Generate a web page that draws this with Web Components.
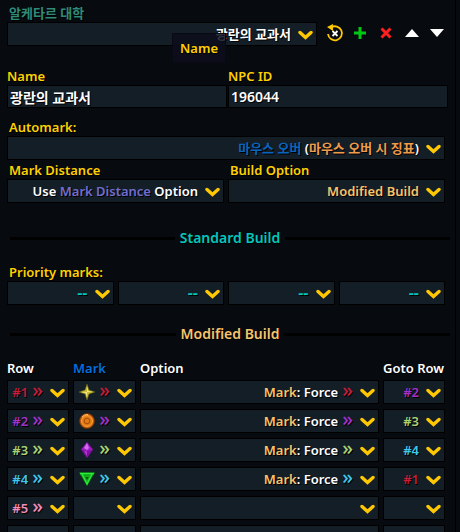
<!DOCTYPE html>
<html lang="ko">
    <head>
        <meta charset="UTF-8" />
        <meta name="viewport" content="width=device-width, initial-scale=1.0" />
        <title>NPC Marks</title>
        <style>
            :root {
                --gold: #ffd100;
                --field: #131e26;
                --r1: #c41e3a;
                --r2: #a330c9;
                --r3: #aad372;
                --r4: #3fc7eb;
                --r5: #f48cba;
            }
            html {
                height: 100%;
                overflow: hidden;
                background: #070a0f;
            }
            body {
                margin: 0;
                color: #fff;
                font: 600 13px/18px 'Noto Sans', 'Noto Sans CJK KR', sans-serif;
                text-shadow: 1px 1px 0 #000;
            }
        </style>
    </head>
    <body>
        <npc-panel></npc-panel>

        <script>
            const define = (name, html, setup) => {
                const template = document.createElement('template')
                template.innerHTML = html
                customElements.define(
                    name,
                    class extends HTMLElement {
                        constructor() {
                            super()
                            this.attachShadow({ mode: 'open' })
                            this.shadowRoot.append(template.content.cloneNode(true))
                        }
                        connectedCallback() {
                            if (setup) setup(this, this.shadowRoot)
                        }
                    }
                )
            }

            // drop-down: the select is the box, the slot is its coloured face
            define(
                'pick-list',
                `
<style>
:host {
    display: block;
    min-width: 0;
}
label {
    display: block;
    padding-left: 2px;
    color: var(--gold);
}
label[hidden] {
    display: none;
}
.box {
    display: grid;
    grid-template-rows: 24px;
}
.box > * {
    grid-area: 1 / 1;
    min-width: 0;
}
select {
    appearance: none;
    width: 100%;
    margin: 0;
    padding: 0;
    border: 1px solid #000;
    border-radius: 0;
    background: var(--field);
    color: transparent;
    font: inherit;
    text-shadow: none;
    outline: 0;
}
.face {
    display: flex;
    align-items: center;
    justify-content: flex-end;
    gap: 7px;
    padding-right: 4px;
    pointer-events: none;
    white-space: nowrap;
}
svg {
    flex: none;
}
</style>
<label for="pick" hidden></label>
<div class="box">
    <select id="pick"><option></option></select>
    <div class="face">
        <slot></slot>
        <svg width="15" height="24" viewBox="0 0 15 24" fill="none">
            <path d="M2 10.500 7.500 15.500 13 10.500" stroke="#ffc800" stroke-width="3.400" stroke-linecap="round" />
        </svg>
    </div>
</div>
`,
                (host, root) => {
                    const label = root.querySelector('label')
                    const select = root.querySelector('select')
                    const text = host.getAttribute('label')
                    if (text) {
                        label.textContent = text
                        label.hidden = false
                    } else {
                        select.setAttribute('aria-label', host.getAttribute('name') || '')
                    }
                    select.options[0].value = host.textContent.trim()
                }
            )

            define(
                'text-field',
                `
<style>
:host {
    display: block;
    min-width: 0;
}
label {
    display: block;
    color: var(--gold);
}
input {
    display: block;
    box-sizing: border-box;
    width: 100%;
    height: 23px;
    margin: 0;
    padding: 0 2px;
    border: 1px solid #000;
    background: var(--field);
    color: #fff;
    font: inherit;
    font-size: 14px;
    text-shadow: inherit;
    outline: 0;
}
</style>
<label for="text"></label>
<input id="text" type="text" />
`,
                (host, root) => {
                    root.querySelector('label').textContent = host.getAttribute('label')
                    root.querySelector('input').value = host.getAttribute('value')
                }
            )

            define(
                'icon-button',
                `
<style>
:host {
    display: block;
}
button {
    display: grid;
    place-items: center;
    width: 100%;
    height: 22px;
    padding: 0;
    border: 0;
    background: none;
}
</style>
<button type="button"><slot></slot></button>
`,
                (host, root) => root.querySelector('button').setAttribute('aria-label', host.getAttribute('name'))
            )

            define(
                'section-rule',
                `
<style>
:host {
    display: flex;
    align-items: center;
    gap: 5px;
    padding: 0 5px 0 3px;
    font-size: 14px;
}
:host::before,
:host::after {
    content: '';
    flex: 1;
    height: 3px;
    background: #000;
}
</style>
<slot></slot>
`
            )

            define(
                'hover-tip',
                `
<style>
:host {
    position: absolute;
    left: 165px;
    top: 11px;
    padding: 5px 7px;
    border: 1px solid #090914;
    background: rgba(13, 13, 28, 0.85);
    color: var(--gold);
}
</style>
<slot></slot>
`
            )

            // small double arrow that carries the colour of its row
            define(
                'row-arrow',
                `
<style>
:host {
    display: block;
    padding-bottom: 4px;
    font: 500 20px/18px 'Noto Sans', sans-serif;
    color: var(--row);
}
</style>
<span>»</span>`
            )

            const marks = [
                `<svg width="16" height="16" viewBox="0 0 16 16">
    <path d="M8 0 10 6 16 8 10 10 8 16 6 10 0 8 6 6Z" fill="#c9bd35" stroke="#5f5a19" stroke-width=".6" />
    <path d="M8 2 9 7 14 8 8 8Z M8 8 8 14 7 9 2 8Z" fill="#f2ea83" />
</svg>`,
                `<svg width="16" height="16" viewBox="0 0 16 16">
    <circle cx="8" cy="8" r="7.5" fill="#c25c0c" stroke="#6d2f05" stroke-width=".8" />
    <circle cx="8" cy="8" r="5.5" fill="#e67b16" stroke="#f8a43c" />
    <circle cx="8" cy="8" r="2.8" fill="#e67b16" stroke="#a34c08" />
    <path d="M3 4Q5 1.300 9 1.500" fill="none" stroke="#ffc069" />
</svg>`,
                `<svg width="16" height="16" viewBox="0 0 16 16">
    <path d="M8 0 14 7.500 8 16 2 7.500Z" fill="#a01fc4" stroke="#4f0a66" stroke-width=".6" />
    <path d="M8 1 10 6 8 8 5 6Z" fill="#d56aec" />
    <path d="M2.500 7.500 8 9 13.500 7.500 8 15Z" fill="#7d10a0" />
    <path d="M5 8.500 8 9.500V14Z" fill="#b23ad2" />
</svg>`,
                `<svg width="16" height="16" viewBox="0 0 16 16">
    <path d="M0 1.500H16L8 15Z" fill="#11a51b" stroke="#064d0b" stroke-width=".6" />
    <path d="M1 2.500H15M3 3 8 13 13 3" fill="none" stroke="#2bea38" stroke-width="1.300" />
    <path d="M5.500 5.500H10.500L8 10Z" fill="#075c0d" stroke="#23cc2e" stroke-width=".6" />
</svg>`
            ]
            const goto = [2, 3, 4, 1]

            const row = (n) => {
                const i = n - 1
                const arrow = '<row-arrow></row-arrow>'
                const used = n <= marks.length
                return `
<div class="row" style="--row: var(--r${n})">
    <pick-list name="Row ${n}">${n < 6 ? `<span class="pack"><span class="num">#${n}</span>${arrow}</span>` : ''}</pick-list>
    <pick-list name="Mark ${n}">${used ? `<span class="pack">${marks[i]}${arrow}</span>` : ''}</pick-list>
    <pick-list name="Option ${n}">${used ? `<span class="pack"><span><span class="sand">Mark</span>: Force</span>${arrow}</span>` : ''}</pick-list>
    <pick-list name="Goto row ${n}">${used ? `<span style="color: var(--r${goto[i]})">#${goto[i]}</span>` : ''}</pick-list>
</div>`
            }

            define(
                'build-rows',
                `
<style>
:host {
    display: block;
}
.head,
.row {
    display: grid;
    grid-template-columns: 62px 63px 1fr 62px;
    gap: 4px;
    margin-bottom: 5px;
}
.head {
    margin-bottom: 3px;
    white-space: nowrap;
}
.pack {
    display: flex;
    align-items: center;
    gap: 4px;
}
.blue {
    color: #0070dd;
}
.sand {
    color: #f7c46c;
}
.num {
    color: var(--row);
}
</style>
<div class="head">
    <span>Row</span><span class="blue">Mark</span><span>Option</span><span>Goto Row</span>
</div>
${[1, 2, 3, 4, 5, 6].map(row).join('')}
`
            )

            define(
                'npc-panel',
                `
<style>
:host {
    display: block;
    margin-right: 4px;
    padding: 4px 0 0 7px;
    border-right: 1px solid #000;
}
.top {
    position: relative;
    display: grid;
    grid-template-columns: 1fr 128px;
    gap: 5px;
    margin-right: 5px;
}
.tools {
    display: grid;
    grid-template-columns: repeat(5, 1fr);
}
.fields {
    display: grid;
    grid-template-columns: 1fr 1fr;
    gap: 1px;
    margin: 21px 7px 10px 0;
}
.form {
    display: grid;
    gap: 1px;
    margin-right: 10px;
}
.pair {
    display: grid;
    grid-template-columns: 1fr 1fr;
    gap: 4px;
}
.four {
    grid-template-columns: repeat(4, 1fr);
    gap: 4px;
    font-size: 16px;
}
.place {
    padding-left: 2px;
    color: #2f8b78;
}
.gold {
    padding-left: 2px;
    color: var(--gold);
}
.cyan {
    color: #00c8be;
}
.sand {
    color: #f7c46c;
}
.violet {
    color: #716dce;
}
.blue {
    color: #0864bd;
}
.orange {
    color: #ee9b4b;
}
section-rule {
    margin: 26px 0 16px;
}
section-rule.second {
    margin: 20px 0 16px;
}
</style>
<div class="place">알케타르 대학</div>
<div class="top">
    <pick-list name="NPC">광란의 교과서</pick-list>
    <div class="tools">
        <icon-button name="Reset">
            <svg width="18" height="20" viewBox="0 0 18 20" fill="none">
                <path d="M5 4.500A7 7 0 1 1 2 11" stroke="#ffc800" stroke-width="1.800" />
                <path d="M1 4 7 1V8Z" fill="#ffc800" />
                <path d="M6.500 8 11.500 13M11.500 8 6.500 13" stroke="#fff" stroke-width="1.800" />
            </svg>
        </icon-button>
        <icon-button name="Add">
            <svg width="14" height="14" viewBox="0 0 14 14">
                <path d="M7 1V13M1 7H13" stroke="#00c814" stroke-width="3" />
            </svg>
        </icon-button>
        <icon-button name="Delete">
            <svg width="12" height="14" viewBox="0 0 12 14">
                <path d="M1.500 2.500 10.500 11.500M10.500 2.500 1.500 11.500" stroke="#ff2020" stroke-width="3" />
            </svg>
        </icon-button>
        <icon-button name="Move up">
            <svg width="14" height="8" viewBox="0 0 14 8"><path d="M7 0 14 8H0Z" fill="#fff" /></svg>
        </icon-button>
        <icon-button name="Move down">
            <svg width="14" height="8" viewBox="0 0 14 8"><path d="M0 0H14L7 8Z" fill="#fff" /></svg>
        </icon-button>
    </div>
    <hover-tip>Name</hover-tip>
</div>

<div class="fields">
    <text-field label="Name" value="광란의 교과서"></text-field>
    <text-field label="NPC ID" value="196044"></text-field>
</div>

<div class="form">
    <pick-list label="Automark:"><span><span class="blue">마우스 오버</span> (<span class="orange">마우스 오버 시 징표</span>)</span></pick-list>
    <div class="pair">
        <pick-list label="Mark Distance"><span>Use <span class="violet">Mark Distance</span> Option</span></pick-list>
        <pick-list label="Build Option"><span class="sand">Modified Build</span></pick-list>
    </div>
</div>

<section-rule class="cyan">Standard Build</section-rule>

<div class="gold">Priority marks:</div>
<div class="form four">
    <pick-list name="Priority 1"><span class="cyan">--</span></pick-list>
    <pick-list name="Priority 2"><span class="cyan">--</span></pick-list>
    <pick-list name="Priority 3"><span class="cyan">--</span></pick-list>
    <pick-list name="Priority 4"><span class="cyan">--</span></pick-list>
</div>

<section-rule class="sand second">Modified Build</section-rule>

<div class="form"><build-rows></build-rows></div>
`
            )
        </script>
    </body>
</html>
